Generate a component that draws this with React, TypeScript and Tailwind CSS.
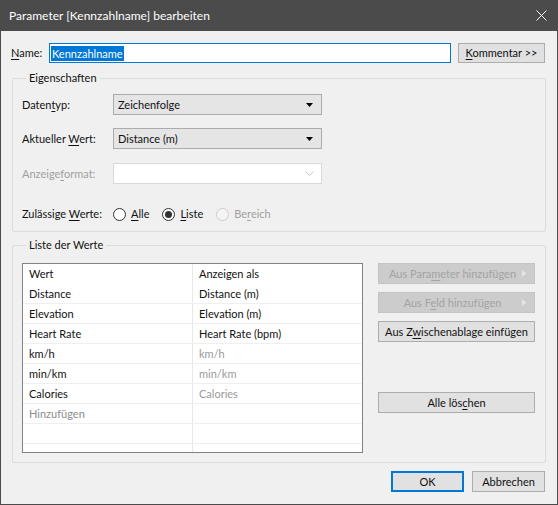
import React from 'react'

function U({ children }: { children: React.ReactNode }) {
  return <span className="underline underline-offset-2">{children}</span>
}

function Caret({ light }: { light?: boolean }) {
  if (light) {
    return (
      <svg width="9" height="6" viewBox="0 0 9 6" className="shrink-0">
        <path d="M0.5 0.5 L4.5 4.5 L8.5 0.5" fill="none" stroke="#c4c4c4" strokeWidth="1" />
      </svg>
    )
  }
  return (
    <svg width="7" height="4" viewBox="0 0 7 4" className="shrink-0">
      <path d="M0 0 H7 L3.5 4 Z" fill="#000" />
    </svg>
  )
}

function Combo({ value, disabled }: { value?: string; disabled?: boolean }) {
  return (
    <div
      className={
        disabled
          ? 'w-[209px] h-[21px] flex items-center justify-between pl-[4px] pr-[7px] bg-white border border-[#d9d9d9]'
          : 'w-[209px] h-[21px] flex items-center justify-between pl-[4px] pr-[8px] bg-[#e5e5e5] border border-[#acacac]'
      }
    >
      <span>{value}</span>
      <Caret light={disabled} />
    </div>
  )
}

function Radio({ checked, disabled, children }: { checked?: boolean; disabled?: boolean; children: React.ReactNode }) {
  return (
    <div className={disabled ? 'flex items-center gap-[5px] text-[#a0a0a0]' : 'flex items-center gap-[5px]'}>
      <div
        className={
          disabled
            ? 'w-[13px] h-[13px] rounded-full border border-[#cccccc] bg-[#f5f5f5]'
            : 'w-[13px] h-[13px] rounded-full border border-[#333333] bg-white flex items-center justify-center'
        }
      >
        {checked && <div className="w-[7px] h-[7px] rounded-full bg-[#333333]" />}
      </div>
      <span>{children}</span>
    </div>
  )
}

function SideButton({ children, disabled, arrow }: { children: React.ReactNode; disabled?: boolean; arrow?: boolean }) {
  return (
    <div
      className={
        disabled
          ? 'relative w-[157px] h-[21px] flex items-center justify-center bg-[#cccccc] border border-[#c4c4c4] text-[#a3a3a3]'
          : 'relative w-[157px] h-[21px] flex items-center justify-center bg-[#e1e1e1] border border-[#adadad]'
      }
    >
      <span className={arrow ? 'pr-[8px] whitespace-nowrap' : 'whitespace-nowrap'}>{children}</span>
      {arrow && (
        <svg width="4" height="7" viewBox="0 0 4 7" className="absolute right-[8px] top-[6px]">
          <path d="M0 0 L4 3.5 L0 7 Z" fill="#e6e6e6" />
        </svg>
      )}
    </div>
  )
}

const rows: { a: string; b: string; aGray?: boolean; bGray?: boolean }[] = [
  { a: 'Distance', b: 'Distance (m)' },
  { a: 'Elevation', b: 'Elevation (m)' },
  { a: 'Heart Rate', b: 'Heart Rate (bpm)' },
  { a: 'km/h', b: 'km/h', bGray: true },
  { a: 'min/km', b: 'min/km', bGray: true },
  { a: 'Calories', b: 'Calories', bGray: true },
  { a: 'Hinzufügen', b: '', aGray: true },
  { a: '', b: '' },
  { a: '', b: '' },
]

export default function App() {
  return (
    <div className="w-[558px] h-[505px] flex flex-col bg-[#f0f0f0] border border-t-0 border-[#4b4b4b] text-[11px] leading-[16px] text-[#111111] font-['Lato',sans-serif]">
      {/* title bar */}
      <div className="h-[31px] shrink-0 -mx-px flex items-center justify-between pl-[9px] pr-[11px] bg-[#4b4b4b] text-white">
        <span className="text-[12px]">Parameter [Kennzahlname] bearbeiten</span>
        <svg width="11" height="11" viewBox="0 0 11 11">
          <path d="M0.5 0.5 L10.5 10.5 M10.5 0.5 L0.5 10.5" stroke="#ffffff" strokeWidth="1" />
        </svg>
      </div>

      <div className="flex-1 flex flex-col pl-[10px] pr-[11px] pt-[12px]">
        {/* name row */}
        <div className="flex items-center h-[20px]">
          <span className="w-[38px]">
            <U>N</U>ame:
          </span>
          <div className="w-[402px] h-[20px] flex items-center pl-px bg-white border border-[#0078d7]">
            <span className="bg-[#0078d7] text-white px-px leading-[15px]">Kennzahlname</span>
          </div>
          <div className="ml-[7px] w-[87px] h-[20px] flex items-center justify-center bg-[#e1e1e1] border border-[#adadad]">
            <span>
              <U>K</U>ommentar &gt;&gt;
            </span>
          </div>
        </div>

        {/* Eigenschaften */}
        <fieldset className="mt-[7px] ml-px border border-[#dcdcdc] rounded-[2px] pl-[9px] pr-[9px] pb-[9px]">
          <legend className="ml-[4px] px-[3px]">Eigenschaften</legend>
          <div className="mt-[8px] flex items-center">
            <span className="w-[91px] whitespace-nowrap">
              Daten<U>t</U>yp:
            </span>
            <Combo value="Zeichenfolge" />
          </div>
          <div className="mt-[13px] flex items-center">
            <span className="w-[91px] whitespace-nowrap">
              Aktueller <U>W</U>ert:
            </span>
            <Combo value="Distance (m)" />
          </div>
          <div className="mt-[14px] flex items-center">
            <span className="w-[91px] whitespace-nowrap text-[#a0a0a0]">
              Anzeige<U>f</U>ormat:
            </span>
            <Combo disabled />
          </div>
          <div className="mt-[22px] flex items-center">
            <span className="w-[91px] whitespace-nowrap">
              Zulässige <U>W</U>erte:
            </span>
            <div className="flex items-center gap-[13px]">
              <Radio>
                <U>A</U>lle
              </Radio>
              <Radio checked>
                <U>L</U>iste
              </Radio>
              <Radio disabled>
                Be<U>r</U>eich
              </Radio>
            </div>
          </div>
        </fieldset>

        {/* Liste der Werte */}
        <fieldset className="mt-[5px] ml-px border border-[#dcdcdc] rounded-[2px] pl-[9px] pr-[10px] pb-[9px]">
          <legend className="ml-[4px] px-[3px]">Liste der Werte</legend>
          <div className="mt-[10px] flex items-start">
            <div className="w-[341px] h-[190px] overflow-hidden bg-white border border-[#828282] flex flex-col">
              <div className="h-[20px] shrink-0 flex items-center">
                <div className="w-[169px] pl-[6px]">Wert</div>
                <div className="flex-1 h-full flex items-center pl-[6px] border-l border-[#e8e8e8]">Anzeigen als</div>
              </div>
              {rows.map((r, i) => (
                <div key={i} className="h-[20px] shrink-0 flex items-center border-b border-[#efefef]">
                  <div className={r.aGray ? 'w-[169px] pl-[6px] text-[#8c8c8c]' : 'w-[169px] pl-[6px]'}>{r.a}</div>
                  <div
                    className={
                      r.bGray
                        ? 'flex-1 h-full flex items-center pl-[6px] border-l border-[#e8e8e8] text-[#9a9a9a]'
                        : 'flex-1 h-full flex items-center pl-[6px] border-l border-[#e8e8e8]'
                    }
                  >
                    {r.b}
                  </div>
                </div>
              ))}
            </div>

            <div className="ml-[15px] flex flex-col">
              <SideButton disabled arrow>
                Aus Para<U>m</U>eter hinzufügen
              </SideButton>
              <div className="mt-[8px]">
                <SideButton disabled arrow>
                  Aus F<U>e</U>ld hinzufügen
                </SideButton>
              </div>
              <div className="mt-[8px]">
                <SideButton>
                  Aus Z<U>w</U>ischenablage einfügen
                </SideButton>
              </div>
              <div className="mt-[50px]">
                <SideButton>
                  Alle lös<U>c</U>hen
                </SideButton>
              </div>
            </div>
          </div>
        </fieldset>

        {/* bottom buttons */}
        <div className="mt-[8px] mr-px flex justify-end gap-[8px]">
          <div className="w-[73px] h-[21px] flex items-center justify-center bg-[#e1e1e1] border-2 border-[#0078d7]">OK</div>
          <div className="w-[73px] h-[21px] flex items-center justify-center bg-[#e1e1e1] border border-[#adadad]">Abbrechen</div>
        </div>
      </div>
    </div>
  )
}
